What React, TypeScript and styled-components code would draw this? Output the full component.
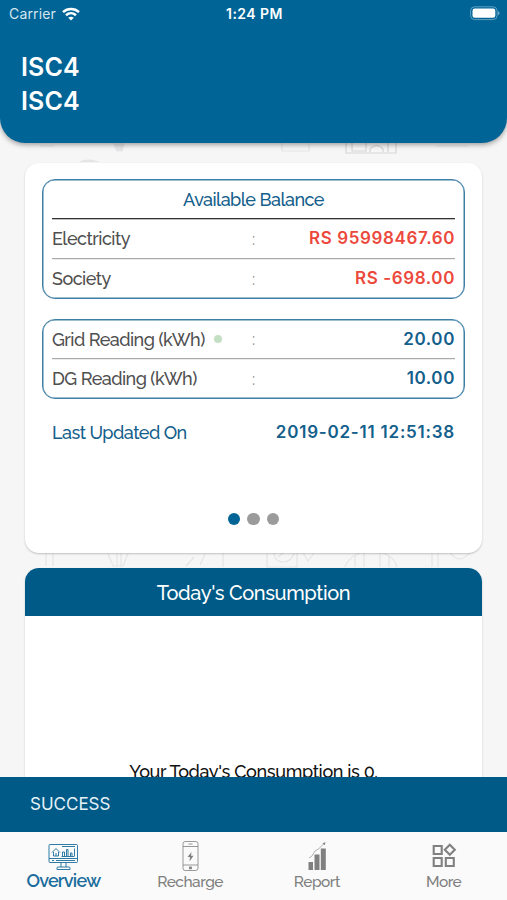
import React from "react";
import styled, { createGlobalStyle } from "styled-components";

const GlobalStyle = createGlobalStyle`
  * { box-sizing: border-box; }
  body { margin: 0; background: #f5f5f6; }
`;

const display = `"Raleway", "Lato", sans-serif`;
const system = `"Inter", sans-serif`;

const Screen = styled.div`
  width: 507px;
  height: 900px;
  overflow: hidden;
  display: flex;
  flex-direction: column;
  background: #f6f6f7;
  font-family: ${display};
`;

const Header = styled.header`
  position: relative;
  z-index: 1;
  flex: none;
  height: 143px;
  background: #006496;
  color: #fff;
  border-radius: 0 0 25px 25px;
  box-shadow: 0 2px 5px rgba(0, 0, 0, 0.35);
  font-family: ${system};
`;

const StatusBar = styled.div`
  display: grid;
  grid-template-columns: 1fr auto 1fr;
  align-items: center;
  height: 27px;
  padding: 0 7px 0 9px;
  font-size: 14px;
`;

const Carrier = styled.div`
  display: flex;
  align-items: center;
  gap: 6px;
  letter-spacing: 0.15px;
  color: #d5e6ef;
`;

const Clock = styled.div`
  font-weight: 600;
  font-size: 14px;
  letter-spacing: 0.45px;
`;

const Battery = styled.svg`
  justify-self: end;
`;

const Names = styled.div`
  padding: 23px 21px 0;
  font-size: 25px;
  font-weight: 600;
  line-height: 34px;
  letter-spacing: 0.1px;
`;

const Body = styled.main`
  position: relative;
  flex: 1;
  min-height: 0;
  overflow: hidden;
  display: flex;
  flex-direction: column;
  gap: 15px;
  padding: 20px 25px 0;
`;

const Doodles = styled.svg`
  position: absolute;
  left: 0;
  top: 0;
`;

const Card = styled.section<{ $height: number }>`
  position: relative;
  flex: none;
  height: ${(p) => p.$height}px;
  overflow: hidden;
  background: #fff;
  border-radius: 14px;
  box-shadow: 0 1px 2px rgba(0, 0, 0, 0.22);
`;

const BalanceCard = styled(Card)`
  display: flex;
  flex-direction: column;
  padding: 16px 17px 0;
`;

const Panel = styled.div<{ $gap?: number }>`
  border: 1px solid #3f7fa5;
  box-shadow: inset 0 0 0 0.5px #3f7fa5;
  border-radius: 13px;
  padding: 0 9px;
  margin-bottom: ${(p) => p.$gap ?? 0}px;
`;

const PanelTitle = styled.div`
  height: 39px;
  line-height: 39px;
  text-align: center;
  font-size: 18px;
  font-weight: 500;
  letter-spacing: -0.55px;
  color: #14608c;
  border-bottom: 1px solid #333;
  box-shadow: 0 1px 0 rgba(0, 0, 0, 0.25);
`;

const Row = styled.div<{ $line?: boolean; $height?: number }>`
  display: grid;
  grid-template-columns: 195.500px 12px 1fr;
  align-items: center;
  height: ${(p) => p.$height ?? 39}px;
  border-bottom: ${(p) => (p.$line ? "1px solid #aaa" : "none")};
  box-shadow: ${(p) => (p.$line ? "0 1px 0 #ececec" : "none")};
`;

const Label = styled.div<{ $blue?: boolean }>`
  display: flex;
  align-items: center;
  gap: 9px;
  font-size: 18px;
  font-weight: 500;
  white-space: nowrap;
  letter-spacing: -0.54px;
  color: ${(p) => (p.$blue ? "#14608c" : "#505050")};
`;

const StatusDot = styled.i`
  width: 8px;
  height: 8px;
  border-radius: 50%;
  background: #c4dfc3;
`;

const Colon = styled.div`
  text-align: center;
  font-size: 17px;
  color: #888;
`;

const Value = styled.div<{ $red?: boolean; $spacing?: number }>`
  text-align: right;
  font-family: ${system};
  font-weight: 600;
  font-size: 17px;
  line-height: 20px;
  padding-bottom: 1px;
  white-space: nowrap;
  letter-spacing: ${(p) => p.$spacing ?? 0.6}px;
  color: ${(p) => (p.$red ? "#ec493d" : "#14608c")};
`;

const Updated = styled.div`
  display: flex;
  align-items: center;
  justify-content: space-between;
  height: 24px;
  margin-top: 21px;
  padding: 0 10px;
`;

const Pager = styled.div`
  display: flex;
  justify-content: center;
  gap: 7px;
  margin-top: 68.500px;
`;

const Page = styled.i<{ $on?: boolean }>`
  width: 12.5px;
  height: 12.5px;
  border-radius: 50%;
  background: ${(p) => (p.$on ? "#006496" : "#9b9b9b")};
`;

const CardHeading = styled.div`
  height: 48px;
  line-height: 50px;
  text-align: center;
  background: #005a87;
  color: #fff;
  font-size: 20px;
  font-weight: 500;
  letter-spacing: -0.37px;
`;

const Message = styled.div`
  padding-top: 144px;
  text-align: center;
  font-size: 18px;
  font-weight: 500;
  line-height: 24px;
  letter-spacing: -0.36px;
  color: #111;
`;

const Snackbar = styled.div`
  flex: none;
  height: 55px;
  padding-left: 30px;
  line-height: 54px;
  background: #005a87;
  color: #e6f1f6;
  font-family: ${system};
  font-size: 17px;
`;

const Tabs = styled.nav`
  flex: none;
  height: 68px;
  display: grid;
  grid-template-columns: repeat(4, 1fr);
  background: #fafafa;
`;

const Tab = styled.div<{ $active?: boolean }>`
  display: flex;
  flex-direction: column;
  align-items: center;
  padding-top: 8px;
  color: ${(p) => (p.$active ? "#1a6d9d" : "#808080")};
  svg {
    height: 32px;
    flex: none;
  }
`;

const TabLabel = styled.span<{ $active?: boolean }>`
  margin-top: ${(p) => (p.$active ? -2 : -1)}px;
  font-size: ${(p) => (p.$active ? 18 : 15.5)}px;
  font-weight: ${(p) => (p.$active ? 600 : 500)};
  letter-spacing: ${(p) => (p.$active ? -0.75 : -0.5)}px;
  line-height: 22px;
`;

const Wifi = () => (
  <svg width="18" height="14" viewBox="0 0 18 14" fill="none" stroke="#fff" strokeWidth="2.5">
    <path d="M1 5.1C5.5.9 12.5.9 17 5.1" />
    <path d="M4 8.3C7 5.6 11 5.6 14 8.3" />
    <path d="M9 13.5 6.2 10.7Q9 8.6 11.8 10.7Z" fill="#fff" stroke="none" />
  </svg>
);

const MonitorIcon = () => (
  <svg width="32" height="32" viewBox="0 0 32 32" fill="none" stroke="currentColor" strokeWidth="0.9">
    <rect x="2" y="4.5" width="28.500" height="18" rx="1" />
    <path d="M2 18.5h28.500M5 20.5h2M9 20.5h19M15 6.5h13" />
    <path d="m5 12.500 4-4 4 4M6.500 12v4h5v-4M9 16v-3" />
    <path d="M14.500 16.500h13M15.500 16v-4h2v4M19.500 16V9.500h1.500V16M23.500 16v-3h1.500v3M27.500 16V8.500" />
    <path d="M14 23v4M19 23v4M10 29.500v-1.500q0-1 1-1h11q1 0 1 1v1.500z" />
  </svg>
);

const PhoneIcon = () => (
  <svg width="20" height="32" viewBox="0 0 20 32" fill="none" stroke="currentColor" strokeWidth="0.8">
    <rect x="3" y="1.500" width="15" height="29" rx="2.200" />
    <path d="M3 6.500h15M3 25h15M8.500 4h4" />
    <rect x="9.500" y="27" width="2" height="1.800" fill="currentColor" />
    <path d="m11.500 12-4 5h2.500l-.5 4.500 4-5.700H11z" fill="currentColor" stroke="none" />
  </svg>
);

const ReportIcon = () => (
  <svg width="20" height="32" viewBox="0 0 20 32" fill="currentColor">
    <path d="M1.500 22H6v8H1.500zM7.500 14.500h5V30h-5zM13.800 8.500h5V30h-5z" />
    <path d="m2 18 3-2 3-5 3.500-2 6-6" fill="none" stroke="currentColor" strokeWidth="0.600" />
    <path d="m15.500 3.200 3-1-.8 3z" />
  </svg>
);

const MoreIcon = () => (
  <svg width="26" height="32" viewBox="0 0 26 32" fill="none" stroke="currentColor" strokeWidth="2.100">
    <path d="M2.700 6h8v8h-8zM2.700 18h8v8h-8zM14.800 18h8v8h-8z" />
    <path d="m18.800 4.700 5 5-5 5-5-5z" />
  </svg>
);

const tabs = [
  { label: "Overview", Icon: MonitorIcon, active: true },
  { label: "Recharge", Icon: PhoneIcon },
  { label: "Report", Icon: ReportIcon },
  { label: "More", Icon: MoreIcon },
];

export default function App() {
  return (
    <>
      <GlobalStyle />
      <Screen>
        <Header>
          <StatusBar>
            <Carrier>Carrier <Wifi /></Carrier>
            <Clock>1:24 PM</Clock>
            <Battery width="30" height="15" viewBox="0 0 30 15">
              <rect x="0.600" y="0.800" width="26.500" height="12.800" rx="4" fill="none" stroke="#5f9fbe" />
              <rect x="2.500" y="2.600" width="22.800" height="9.200" rx="2.200" fill="#fff" />
              <path d="M28 5q3 2.200 0 4.400z" fill="#72abc6" />
            </Battery>
          </StatusBar>
          <Names>ISC4<br />ISC4</Names>
        </Header>
        <Body>
          <Doodles width="507" height="634" fill="none" stroke="#e5e5e7" strokeWidth="1.200">
            <path d="M346 0v10h50V0M352 0v8h14V0M370 9V6q7-7 13 0v3M388 0v9" stroke="#d6d6d8" />
            <path d="M282 0v8h27V0M436 3h32M40 3h14" />
            <path d="M114 1h10l-2 7h-5zM80 19q8-4 18 0" fill="#e5e5e7" />
            <path d="M46 408v15M53 408v15M107 408l6 15h10l6-15M117 408v15M121 408v15M186 423l8-9M200 422l5-11M223 410v14" />
            <path d="M267 408v16h30v-16M274 408q0 11 9 11t12-11M278 414l8-6M303 410l5 8 6-8M345 424q6-15 26-16 22 1 26 16M355 424v-11M364 424v-15M380 424v-15M389 424v-12M432 408v16M438 408v16M449 408q10 16 22 0" />
          </Doodles>
          <BalanceCard $height={390}>
            <Panel $gap={20}>
              <PanelTitle>Available Balance</PanelTitle>
              <Row $line $height={40}>
                <Label>Electricity</Label><Colon>:</Colon><Value $red>RS 95998467.60</Value>
              </Row>
              <Row>
                <Label>Society</Label><Colon>:</Colon><Value $red>RS -698.00</Value>
              </Row>
            </Panel>
            <Panel>
              <Row $line>
                <Label>Grid Reading (kWh)<StatusDot /></Label><Colon>:</Colon><Value>20.00</Value>
              </Row>
              <Row>
                <Label>DG Reading (kWh)</Label><Colon>:</Colon><Value>10.00</Value>
              </Row>
            </Panel>
            <Updated>
              <Label $blue>Last Updated On</Label>
              <Value $spacing={0.78}>2019-02-11 12:51:38</Value>
            </Updated>
            <Pager><Page $on /><Page /><Page /></Pager>
          </BalanceCard>
          <Card $height={340}>
            <CardHeading>Today's Consumption</CardHeading>
            <Message>Your Today's Consumption is 0.</Message>
          </Card>
        </Body>
        <Snackbar>SUCCESS</Snackbar>
        <Tabs>
          {tabs.map(({ label, Icon, active }) => (
            <Tab key={label} $active={active}>
              <Icon />
              <TabLabel $active={active}>{label}</TabLabel>
            </Tab>
          ))}
        </Tabs>
      </Screen>
    </>
  );
}
